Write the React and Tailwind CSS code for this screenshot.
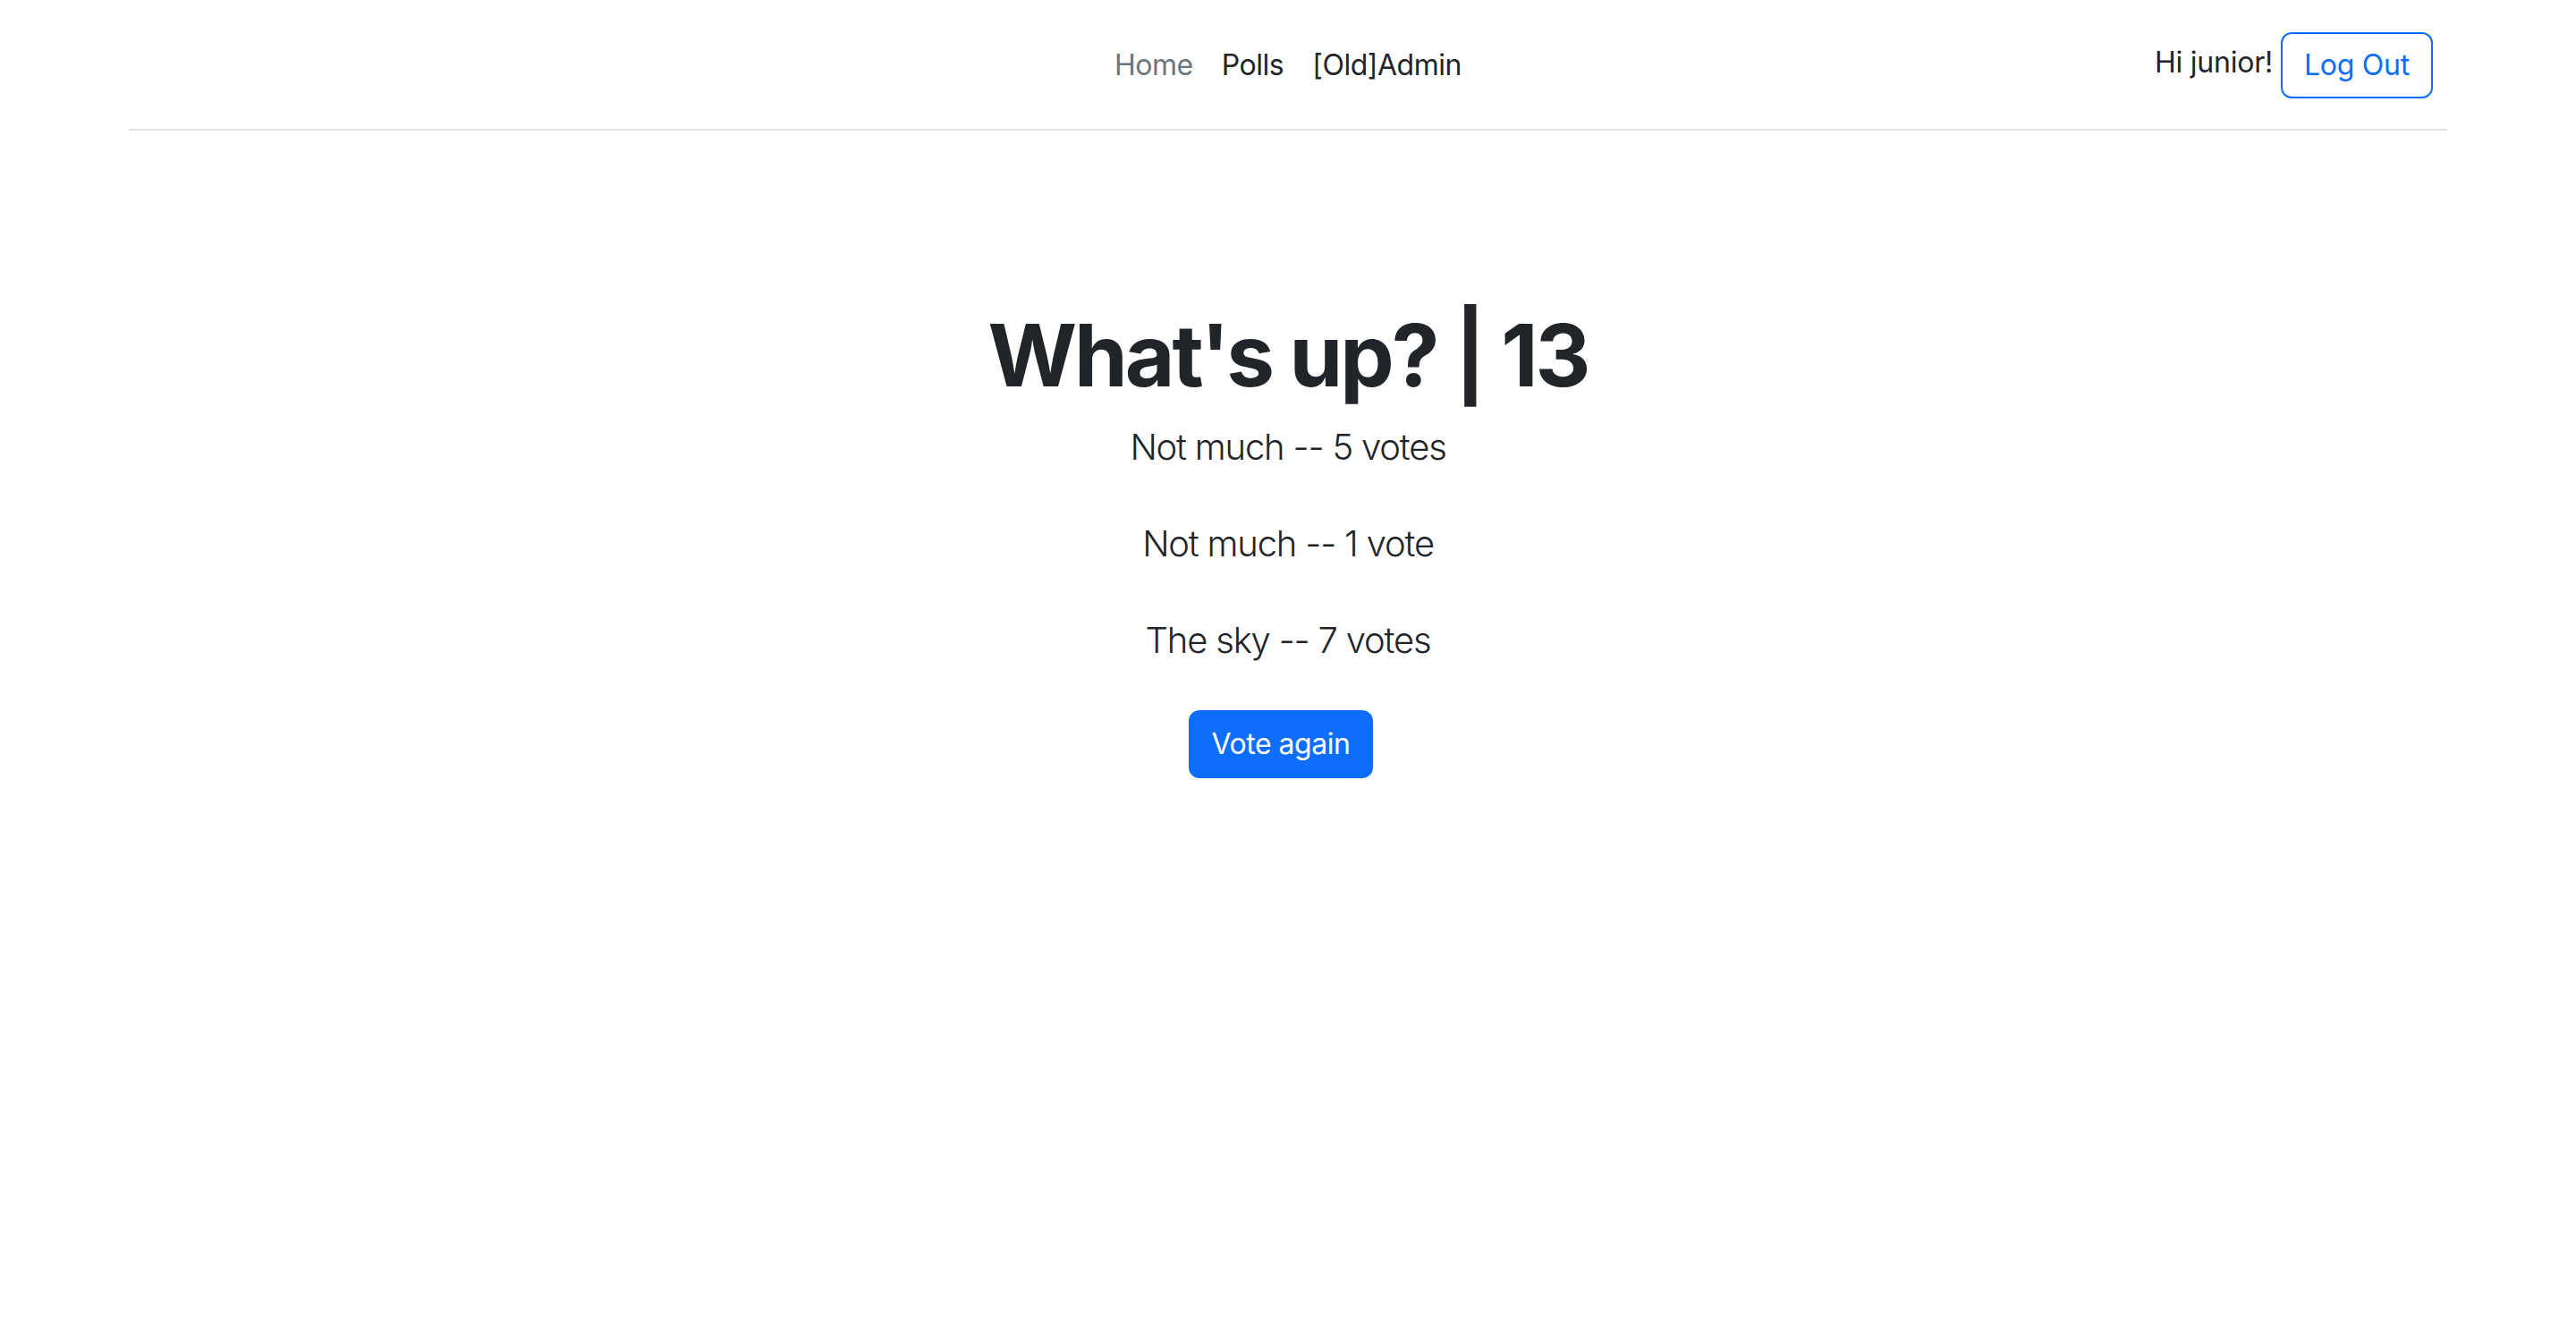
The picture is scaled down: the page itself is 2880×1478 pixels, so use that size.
import React from 'react';

const polls = [
  { id: 1, text: 'Not much', votes: 5 },
  { id: 2, text: 'Not much', votes: 1 },
  { id: 3, text: 'The sky', votes: 7 },
];

export default function App() {
  return (
    <div className="min-h-screen bg-white text-[#212529] font-['Inter','Noto_Sans',sans-serif]">
      {/* Navbar */}
      <header className="w-[2592px] mx-auto h-[146px] border-b-2 border-[#dee2e6] grid grid-cols-[1fr_auto_1fr] items-center">
        <div />
        <nav className="flex items-center text-[32px] leading-[48px] tracking-[-0.015em] pt-[2px]">
          <a className="px-[16px] text-[#6c757d]">Home</a>
          <a className="px-[16px] text-[#212529]">Polls</a>
          <a className="px-[16px] text-[#212529]">[Old]Admin</a>
        </nav>
        <div className="flex items-center justify-end pr-[16px] gap-[9px] pt-[2px] tracking-[-0.015em]">
          <span className="text-[32px] leading-[48px] mb-[6px]">Hi junior!</span>
          <button className="border-2 border-[#0d6efd] text-[#0d6efd] rounded-[12px] text-[32px] leading-[48px] px-[24px] py-[11px]">
            Log Out
          </button>
        </div>
      </header>

      {/* Poll results */}
      <main className="text-center pt-[194px]">
        <h1 className="text-[96px] leading-[1.2] font-bold tracking-[-0.032em] mb-[15px]">What's up? | 13</h1>
        {polls.map((p) => (
          <p key={p.id} className="text-[40px] leading-[60px] font-light tracking-[-0.03em] mb-[48px]">
            {p.text} -- {p.votes} {p.votes === 1 ? 'vote' : 'votes'}
          </p>
        ))}
        <button className="bg-[#0d6efd] text-white text-[32px] leading-[48px] tracking-[-0.015em] px-[24px] py-[12px] border-2 border-[#0d6efd] rounded-[12px] mr-[16px]">
          Vote again
        </button>
      </main>
    </div>
  );
}
